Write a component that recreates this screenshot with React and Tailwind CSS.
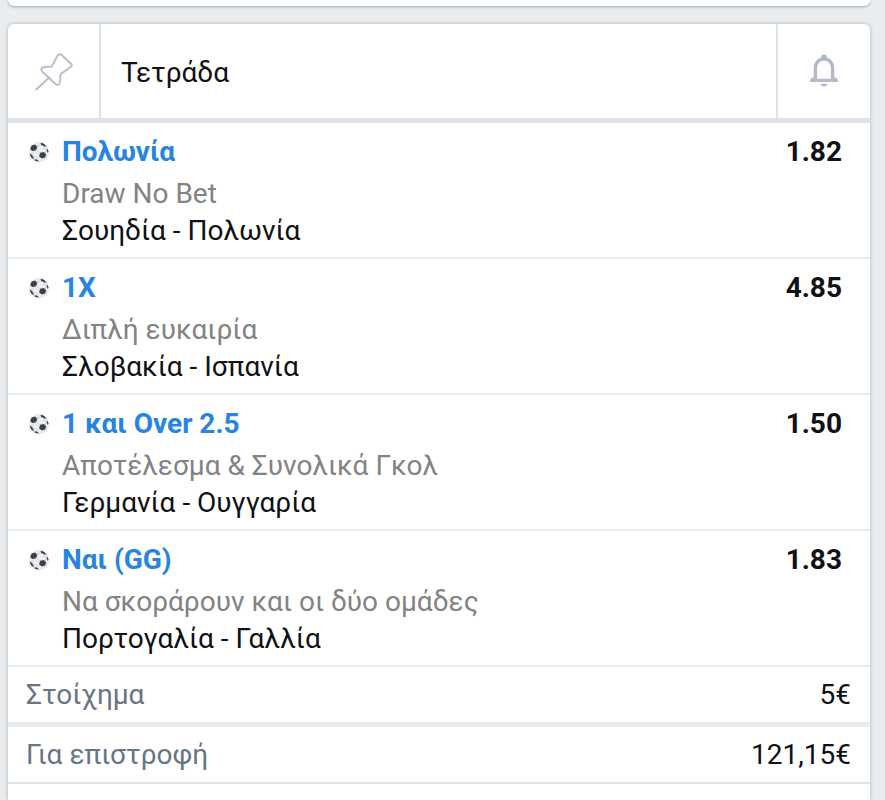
const selections = [
  { pick: 'Πολωνία', market: 'Draw No Bet', match: 'Σουηδία - Πολωνία', odds: '1.82' },
  { pick: '1X', market: 'Διπλή ευκαιρία', match: 'Σλοβακία - Ισπανία', odds: '4.85' },
  { pick: '1 και Over 2.5', market: 'Αποτέλεσμα & Συνολικά Γκολ', match: 'Γερμανία - Ουγγαρία', odds: '1.50' },
  { pick: 'Ναι (GG)', market: 'Να σκοράρουν και οι δύο ομάδες', match: 'Πορτογαλία - Γαλλία', odds: '1.83' },
];

const PinIcon = () => (
  <svg viewBox="0 0 40 40" className="h-10 w-10" fill="none" stroke="#b9bfca" strokeWidth="2" strokeLinecap="round" strokeLinejoin="round" aria-hidden="true">
    <path d="M2.2 38.6 15.2 26.4" />
    <path d="M23.8 4.2Q25.6 2.3 27.6 4L37 12.7Q38.6 14.4 36.8 15.8L27.4 22.6Q26 23.7 26.200 25.500Q26.800 29.500 25.400 32.500Q24 35 21.600 33L8.400 20.700Q5.800 17.600 9 16.400Q12.500 15.400 16 15.900Q17.400 16 18.200 14.600Z" />
  </svg>
);

const BellIcon = () => (
  <svg viewBox="0 0 30 34" className="h-[34px] w-[30px]" fill="none" aria-hidden="true">
    <circle cx="15" cy="3.4" r="2.8" fill="#b4bbc7" />
    <path d="M6.4 26V14.5C6.4 8.5 9.8 5 15 5S23.6 8.5 23.6 14.5V26" stroke="#b4bbc7" strokeWidth="3.4" />
    <path d="M4.7 22.5 1.2 25.5V28H28.8V25.5L25.3 22.5V24.7H4.7Z" fill="#b4bbc7" />
    <path d="M11.6 29.7H18.4Q17.8 32.6 15 32.6T11.6 29.7Z" fill="#b4bbc7" />
  </svg>
);

const BallIcon = () => (
  <svg viewBox="0 0 20 20" className="h-5 w-5" aria-hidden="true">
    <circle cx="10" cy="10" r="9.5" fill="#eeeef0" stroke="#d5d7da" strokeWidth="0.6" />
    <path d="M7.5 6.5 11 11.5M8 3.5 12.5 3M4.5 8.5 3.5 12.5M3.5 12.5 8 16 11 14.8M16 11.5 17.5 8 14 5M15 16 17.5 14.5" stroke="#c9cbcf" strokeWidth="0.7" fill="none" />
    <g fill="#3b4049">
      <path d="M2.6 3.6 6.2 2.6 8.4 5.1 6.7 8.6 3 9 1.2 6.7Z" />
      <path d="M11.1 10.8 14.6 10.1 17.1 12.1 16.2 15.5 12.8 16.6 10.1 14.3Z" />
      <path d="M11.6 0.6Q15.4 1.4 17.5 4.4L15.4 4.6 12 2.7Z" />
      <path d="M0.6 11.4 2.7 12.4 4.6 15.5 4.4 17.5Q1.4 15.3 0.6 11.4Z" />
      <path d="M5.6 17.3 8 17.4 10 19.4Q7.7 19.5 5.6 18.4Z" />
      <path d="M18 6.2 19.4 9.3 18.8 11 17.8 8.4Z" />
    </g>
  </svg>
);

const Selection = ({ pick, market, match, odds }) => (
  <li className="flex items-start border-b-2 border-[#e8eaed] pt-[10px] pr-7 pb-2 pl-[21px] leading-[37px]">
    <span className="mr-[13px] flex h-[37px] items-center">
      <BallIcon />
    </span>
    <div className="flex-1">
      <h2 className="mb-[5px] font-bold text-[#2684e2]">{pick}</h2>
      <p className="text-[#838383]">{market}</p>
      <p>{match}</p>
    </div>
    <span className="font-bold">{odds}</span>
  </li>
);

const App = () => (
  <div className="flex h-screen flex-col overflow-hidden bg-[#e9edf0] pr-[15px] pl-2 font-['Roboto','Noto_Sans',sans-serif] text-[28px] text-[#0f1115]">
    <div className="h-[6px] shrink-0 rounded-b-md bg-white shadow-[0_1px_3px_rgba(0,0,0,0.3)]" />

    <main className="mt-[18px] flex-1 rounded-t-md bg-white shadow-[0_0_4px_rgba(0,0,0,0.25)]">
      <header className="flex h-[99px] items-stretch border-b-[5px] border-[#dfe2e8]">
        <button type="button" aria-label="Pin" className="flex w-[93px] items-center justify-center border-r-2 border-[#dfe2e8]">
          <PinIcon />
        </button>
        <h1 className="flex flex-1 items-center pt-1 pl-5">Τετράδα</h1>
        <button type="button" aria-label="Notifications" className="flex w-[94px] items-center justify-center border-l-2 border-[#dfe2e8]">
          <BellIcon />
        </button>
      </header>

      <ul>
        {selections.map((selection) => (
          <Selection key={selection.match} {...selection} />
        ))}
      </ul>

      <dl>
        <div className="flex h-[60px] items-center justify-between border-b-[5px] border-[#e9ebee] pr-[19px] pl-[18px]">
          <dt className="text-[#687585]">Στοίχημα</dt>
          <dd>5€</dd>
        </div>
        <div className="flex h-[57px] items-center justify-between border-b-2 border-[#dfe2e8] pr-[19px] pl-[18px]">
          <dt className="text-[#687585]">Για επιστροφή</dt>
          <dd>121,15€</dd>
        </div>
      </dl>
    </main>
  </div>
);

export default App;
